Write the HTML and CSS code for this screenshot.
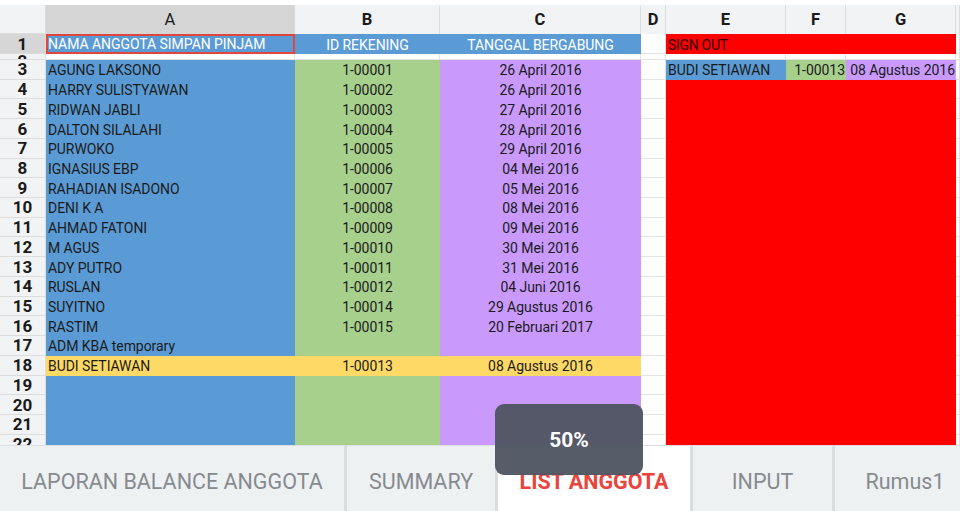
FILE: index.html
```html
<!DOCTYPE html>
<html>
<head>
<meta charset="utf-8">
<link rel="stylesheet" href="styles.css">
</head>
<body>
<div class="screen">
  <div class="grid">
    <div class="row hdr">
      <div class="c rh corner"></div>
      <div class="c ca sel">A</div>
      <div class="c cb">B</div>
      <div class="c cc">C</div>
      <div class="c cd">D</div>
      <div class="c ce">E</div>
      <div class="c cf">F</div>
      <div class="c cg">G</div>
      <div class="c cx"></div>
    </div>
    <div class="row r1">
      <div class="c rh sel">1</div>
      <div class="c ca blue th left selbox">NAMA ANGGOTA SIMPAN PINJAM</div>
      <div class="c cb blue th">ID REKENING</div>
      <div class="c cc blue th">TANGGAL BERGABUNG</div>
      <div class="c cd g"></div>
      <div class="c efg red left signout">SIGN OUT</div>
      <div class="c cx g"></div>
    </div>
    <div class="row r2">
      <div class="c rh"><span class="clip">2</span></div>
      <div class="c ca g"></div>
      <div class="c cb g"></div>
      <div class="c cc g"></div>
      <div class="c cd g"></div>
      <div class="c ce g"></div>
      <div class="c cf g"></div>
      <div class="c cg g"></div>
      <div class="c cx g"></div>
    </div>
    <div class="row">
      <div class="c rh">3</div>
      <div class="c ca blue left">AGUNG LAKSONO</div>
      <div class="c cb green">1-00001</div>
      <div class="c cc purple">26 April 2016</div>
      <div class="c cd g"></div>
      <div class="c ce blue left">BUDI SETIAWAN</div>
      <div class="c cf green right">1-00013</div>
      <div class="c cg purple right">08 Agustus 2016</div>
      <div class="c cx g"></div>
    </div>
    <div class="row">
      <div class="c rh">4</div>
      <div class="c ca blue left">HARRY SULISTYAWAN</div>
      <div class="c cb green">1-00002</div>
      <div class="c cc purple">26 April 2016</div>
      <div class="c cd g"></div>
      <div class="c efg red"></div>
      <div class="c cx g"></div>
    </div>
    <div class="row">
      <div class="c rh">5</div>
      <div class="c ca blue left">RIDWAN JABLI</div>
      <div class="c cb green">1-00003</div>
      <div class="c cc purple">27 April 2016</div>
      <div class="c cd g"></div>
      <div class="c efg red"></div>
      <div class="c cx g"></div>
    </div>
    <div class="row">
      <div class="c rh">6</div>
      <div class="c ca blue left">DALTON SILALAHI</div>
      <div class="c cb green">1-00004</div>
      <div class="c cc purple">28 April 2016</div>
      <div class="c cd g"></div>
      <div class="c efg red"></div>
      <div class="c cx g"></div>
    </div>
    <div class="row">
      <div class="c rh">7</div>
      <div class="c ca blue left">PURWOKO</div>
      <div class="c cb green">1-00005</div>
      <div class="c cc purple">29 April 2016</div>
      <div class="c cd g"></div>
      <div class="c efg red"></div>
      <div class="c cx g"></div>
    </div>
    <div class="row">
      <div class="c rh">8</div>
      <div class="c ca blue left">IGNASIUS EBP</div>
      <div class="c cb green">1-00006</div>
      <div class="c cc purple">04 Mei 2016</div>
      <div class="c cd g"></div>
      <div class="c efg red"></div>
      <div class="c cx g"></div>
    </div>
    <div class="row">
      <div class="c rh">9</div>
      <div class="c ca blue left">RAHADIAN ISADONO</div>
      <div class="c cb green">1-00007</div>
      <div class="c cc purple">05 Mei 2016</div>
      <div class="c cd g"></div>
      <div class="c efg red"></div>
      <div class="c cx g"></div>
    </div>
    <div class="row">
      <div class="c rh">10</div>
      <div class="c ca blue left">DENI K A</div>
      <div class="c cb green">1-00008</div>
      <div class="c cc purple">08 Mei 2016</div>
      <div class="c cd g"></div>
      <div class="c efg red"></div>
      <div class="c cx g"></div>
    </div>
    <div class="row">
      <div class="c rh">11</div>
      <div class="c ca blue left">AHMAD FATONI</div>
      <div class="c cb green">1-00009</div>
      <div class="c cc purple">09 Mei 2016</div>
      <div class="c cd g"></div>
      <div class="c efg red"></div>
      <div class="c cx g"></div>
    </div>
    <div class="row">
      <div class="c rh">12</div>
      <div class="c ca blue left">M AGUS</div>
      <div class="c cb green">1-00010</div>
      <div class="c cc purple">30 Mei 2016</div>
      <div class="c cd g"></div>
      <div class="c efg red"></div>
      <div class="c cx g"></div>
    </div>
    <div class="row">
      <div class="c rh">13</div>
      <div class="c ca blue left">ADY PUTRO</div>
      <div class="c cb green">1-00011</div>
      <div class="c cc purple">31 Mei 2016</div>
      <div class="c cd g"></div>
      <div class="c efg red"></div>
      <div class="c cx g"></div>
    </div>
    <div class="row">
      <div class="c rh">14</div>
      <div class="c ca blue left">RUSLAN</div>
      <div class="c cb green">1-00012</div>
      <div class="c cc purple">04 Juni 2016</div>
      <div class="c cd g"></div>
      <div class="c efg red"></div>
      <div class="c cx g"></div>
    </div>
    <div class="row">
      <div class="c rh">15</div>
      <div class="c ca blue left">SUYITNO</div>
      <div class="c cb green">1-00014</div>
      <div class="c cc purple">29 Agustus 2016</div>
      <div class="c cd g"></div>
      <div class="c efg red"></div>
      <div class="c cx g"></div>
    </div>
    <div class="row">
      <div class="c rh">16</div>
      <div class="c ca blue left">RASTIM</div>
      <div class="c cb green">1-00015</div>
      <div class="c cc purple">20 Februari 2017</div>
      <div class="c cd g"></div>
      <div class="c efg red"></div>
      <div class="c cx g"></div>
    </div>
    <div class="row">
      <div class="c rh">17</div>
      <div class="c ca blue left">ADM KBA temporary</div>
      <div class="c cb green"></div>
      <div class="c cc purple"></div>
      <div class="c cd g"></div>
      <div class="c efg red"></div>
      <div class="c cx g"></div>
    </div>
    <div class="row">
      <div class="c rh">18</div>
      <div class="c ca yellow left">BUDI SETIAWAN</div>
      <div class="c cb yellow">1-00013</div>
      <div class="c cc yellow">08 Agustus 2016</div>
      <div class="c cd g"></div>
      <div class="c efg red"></div>
      <div class="c cx g"></div>
    </div>
    <div class="row">
      <div class="c rh">19</div>
      <div class="c ca blue"></div>
      <div class="c cb green"></div>
      <div class="c cc purple"></div>
      <div class="c cd g"></div>
      <div class="c efg red"></div>
      <div class="c cx g"></div>
    </div>
    <div class="row">
      <div class="c rh">20</div>
      <div class="c ca blue"></div>
      <div class="c cb green"></div>
      <div class="c cc purple"></div>
      <div class="c cd g"></div>
      <div class="c efg red"></div>
      <div class="c cx g"></div>
    </div>
    <div class="row">
      <div class="c rh">21</div>
      <div class="c ca blue"></div>
      <div class="c cb green"></div>
      <div class="c cc purple"></div>
      <div class="c cd g"></div>
      <div class="c efg red"></div>
      <div class="c cx g"></div>
    </div>
    <div class="row">
      <div class="c rh">22</div>
      <div class="c ca blue"></div>
      <div class="c cb green"></div>
      <div class="c cc purple"></div>
      <div class="c cd g"></div>
      <div class="c efg red"></div>
      <div class="c cx g"></div>
    </div>
  </div>
  <div class="tabs">
    <div class="tab t1">LAPORAN BALANCE ANGGOTA</div>
    <div class="tab t2">SUMMARY</div>
    <div class="tab t3 active">LIST ANGGOTA</div>
    <div class="tab t4">INPUT</div>
    <div class="tab t5">Rumus1</div>
  </div>
  <div class="toast">50%</div>
</div>
</body>
</html>
```
FILE: styles.css
```css
* { box-sizing: border-box; }
html, body { margin: 0; padding: 0; background: #ffffff; }
body { font-family: Roboto, "Noto Sans", "Liberation Sans", sans-serif; color: #1b1b1b; }
.screen { position: relative; width: 960px; height: 511px; overflow: hidden; padding-top: 5px; }
.grid { height: 440px; overflow: hidden; }
.row { display: flex; height: 19.73px; }
.row.hdr { height: 29px; }
.row.r1 { height: 20px; }
.row.r2 { height: 6px; }
.c { flex: none; height: 100%; display: flex; align-items: center; justify-content: center; font-size: 14px; letter-spacing: -0.05px; white-space: nowrap; overflow: hidden; padding-top: 1px; }
.rh { width: 46px; background: #f1f3f4; border-bottom: 1px solid #dcdcdc; border-right: 1px solid #dcdcdc; font-weight: 700; font-size: 17px; letter-spacing: 0; color: #1a1a1a; padding-top: 0; }
.rh.sel { background: #d6d6d6; }
.ca { width: 249px; }
.cb { width: 145px; }
.cc { width: 201px; }
.cd { width: 25px; }
.ce { width: 120px; }
.cf { width: 60px; }
.cg { width: 110px; }
.efg { width: 290px; }
.cx { width: 4px; }
.hdr .c { background: #f1f3f4; border-right: 1px solid #dadce0; font-weight: 700; font-size: 16.5px; letter-spacing: 0; color: #1a1a1a; padding-top: 0; }
.hdr .c.sel { background: #d5d5d5; font-weight: 400; }
.hdr .corner { background: #f1f3f4; }
.g { background: #ffffff; border-bottom: 1px solid #e3e3e3; border-right: 1px solid #e3e3e3; }
.blue { background: #5b9bd5; }
.green { background: #a8d08d; }
.purple { background: #c99afb; }
.yellow { background: #ffd966; }
.red { background: #ff0000; }
.left { justify-content: flex-start; padding-left: 2px; }
.right { justify-content: flex-end; padding-right: 1px; }
.th { color: #ffffff; }
.selbox { border: 2px solid #e0463a; padding-left: 0; padding-top: 0; }
.signout { color: #2a0000; letter-spacing: -0.3px; }
.r2 .rh { align-items: flex-start; border-bottom: 1px solid #dcdcdc; }
.clip { display: block; line-height: 20px; margin-top: -3px; }
.tabs { display: flex; height: 66px; background: #eef1f2; border-top: 1px solid #dcdfe1; }
.tab { flex: none; height: 100%; display: flex; align-items: center; justify-content: center; font-size: 21.5px; color: #868b90; border-right: 3px solid #d9dddf; white-space: nowrap; padding-top: 5px; }
.t1 { width: 347px; }
.t2 { width: 151px; }
.t3 { width: 195px; }
.t4 { width: 142px; }
.t5 { width: 140px; border-right: none; }
.tab.active { background: #ffffff; color: #e8453c; font-weight: 700; }
.toast { position: absolute; left: 495px; top: 404px; width: 148px; height: 71px; border-radius: 9px; background: rgba(80, 85, 99, 0.96); color: #ffffff; font-size: 21px; font-weight: 700; display: flex; align-items: center; justify-content: center; }
```
